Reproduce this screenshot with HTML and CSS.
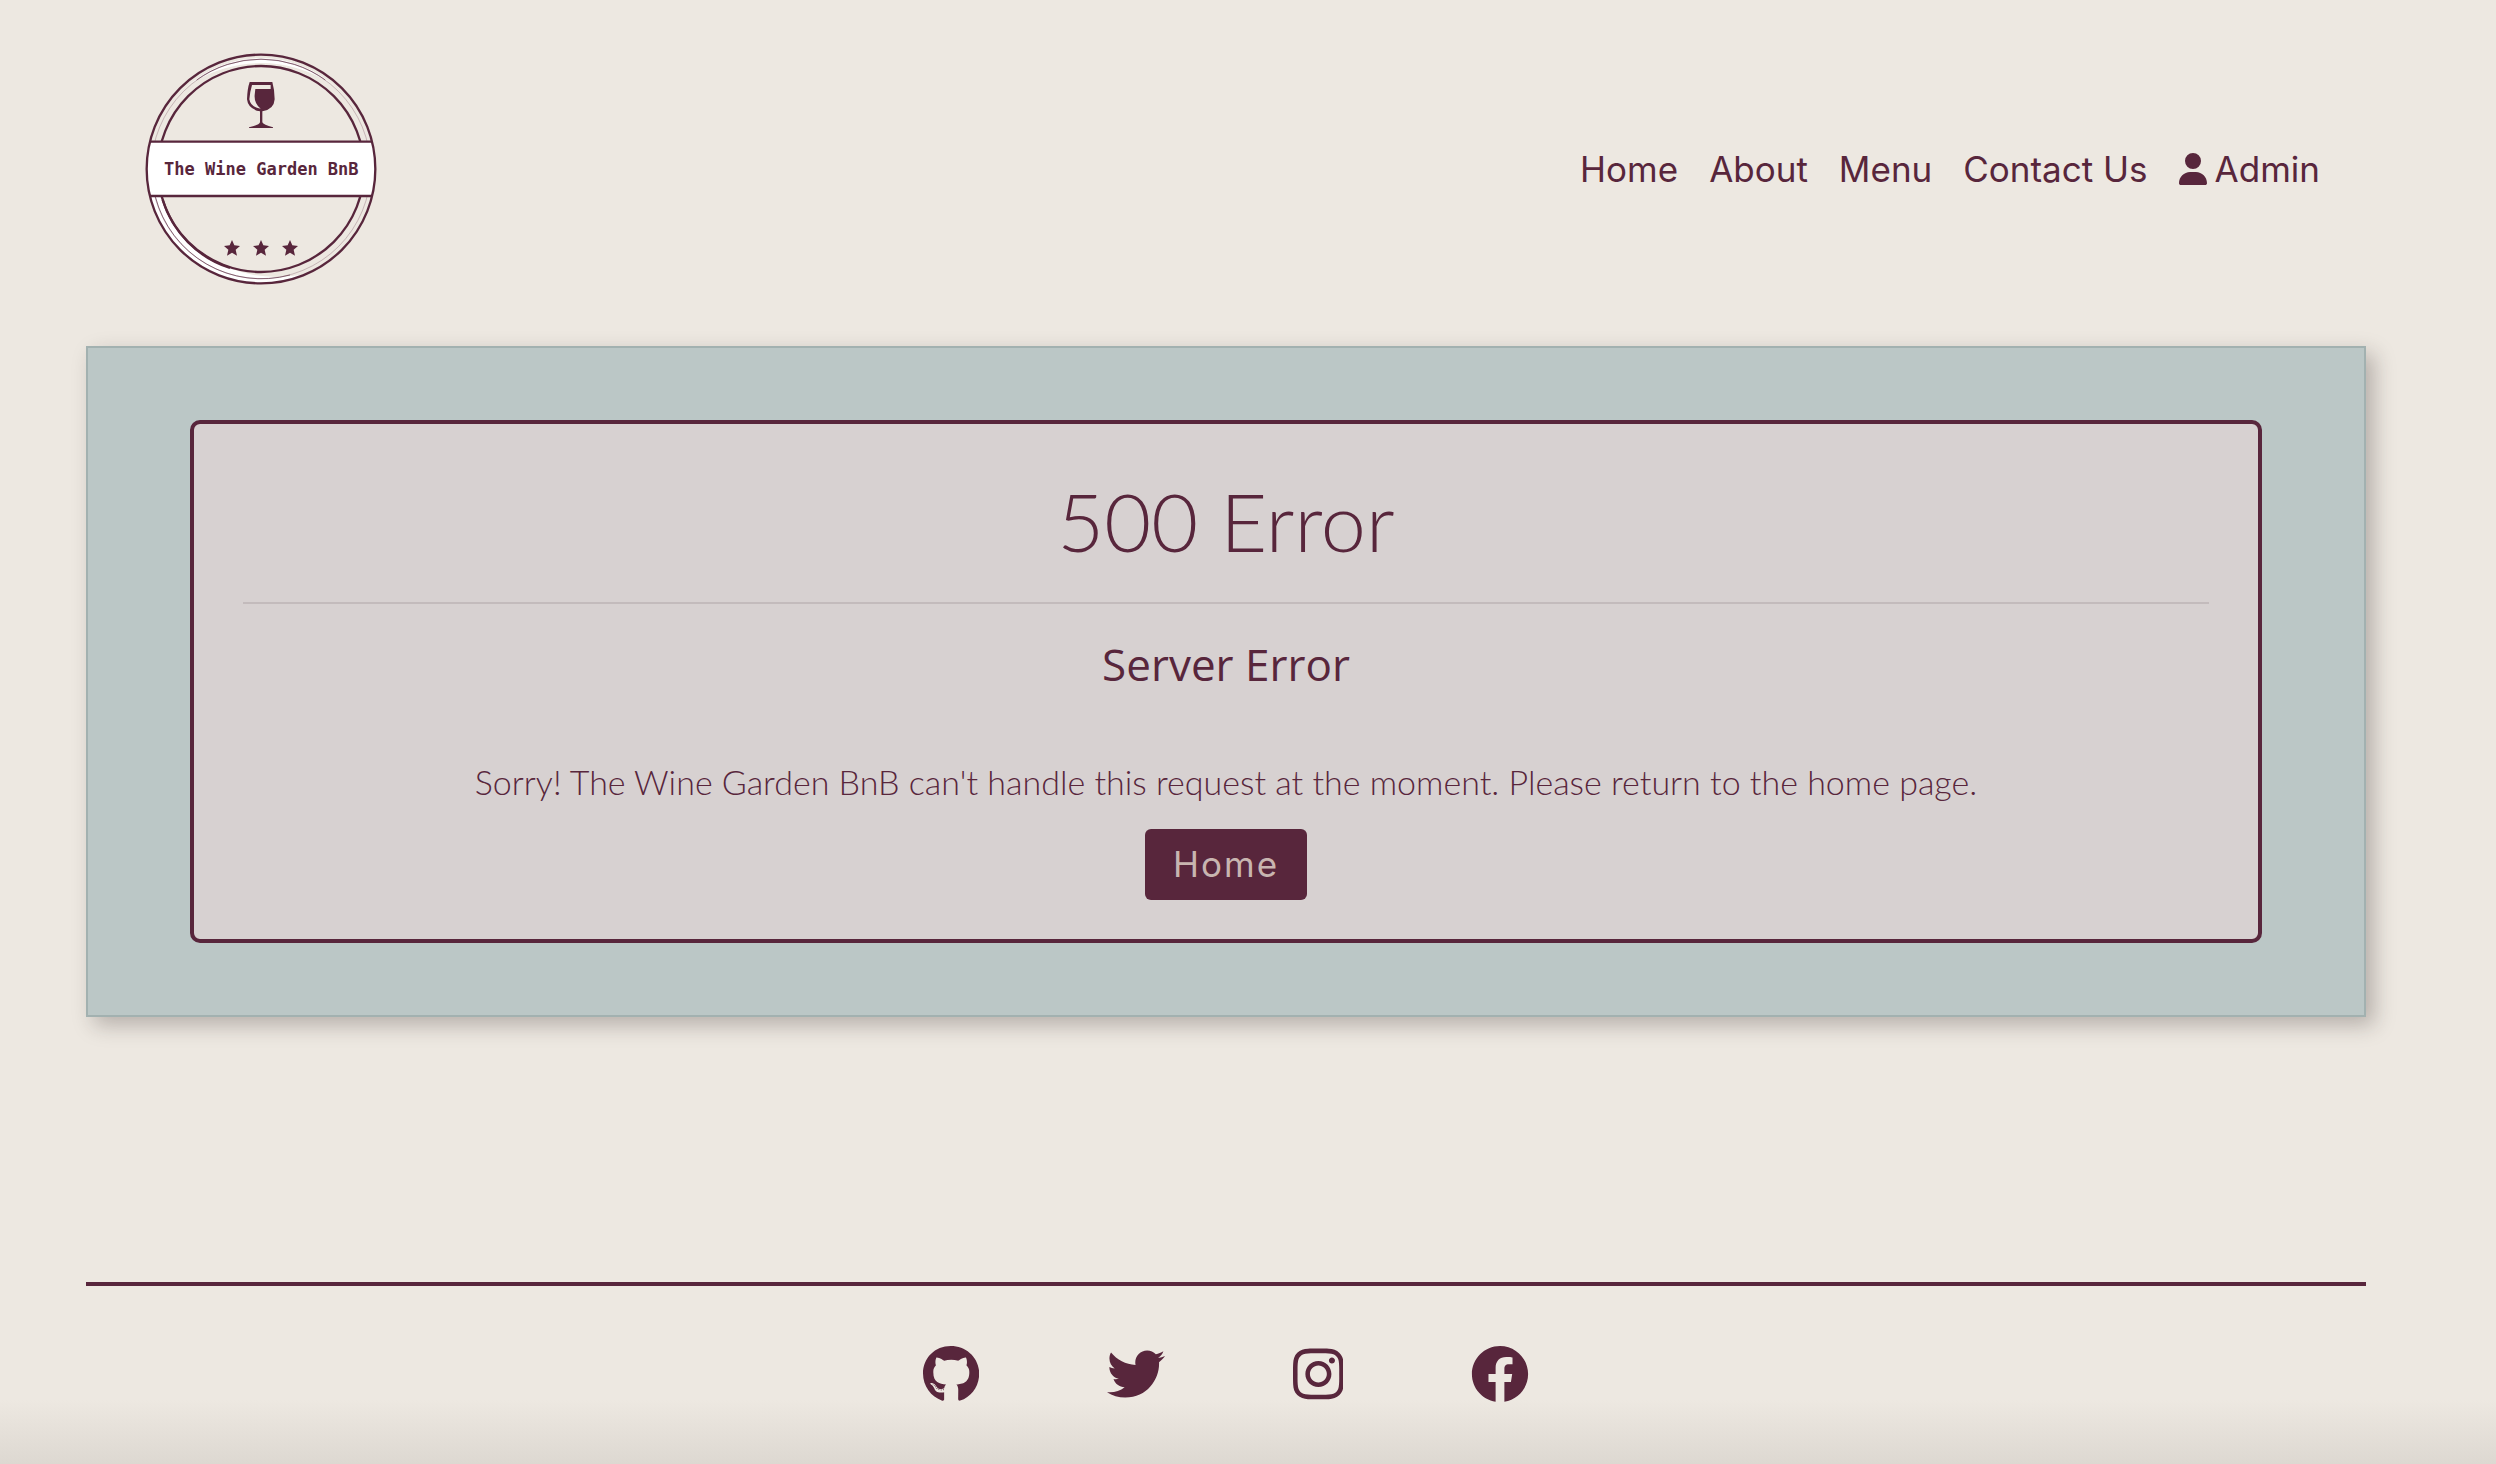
FILE: index.html
```html
<!DOCTYPE html>
<html lang="en">
<head>
<meta charset="utf-8">
<meta name="viewport" content="width=device-width, initial-scale=1">
<title>The Wine Garden BnB</title>
<link rel="stylesheet" href="styles.css">
</head>
<body>
<header class="site-header">
  <a class="brand" href="#" aria-label="The Wine Garden BnB">
    <svg class="logo" viewBox="45 39 696 696" aria-hidden="true">
      <defs>
        <clipPath id="disc"><circle cx="393" cy="387" r="344"/></clipPath>
      </defs>
      <path class="white" d="M165 145A332 332 0 0 1 621 145A342 342 0 0 0 165 145Z M190 126A337 337 0 0 1 596 126A391 391 0 0 0 190 126Z"/>
      <path class="white" d="M60 468A343 343 0 0 0 530 702Q350 735 225 643Q125 570 97 470Z"/>
      <circle class="ring thin faint" cx="393" cy="387" r="329"/>
      <path class="ring thin" d="M200 120A329 329 0 0 1 586 120M76 470A329 329 0 0 0 480 705"/>
      <circle class="ring" cx="393" cy="387" r="309"/>
      <path class="ring" d="M98 480A311 311 0 0 0 300 684"/>
      <g clip-path="url(#disc)">
        <rect class="white" x="40" y="305" width="706" height="163"/>
        <path class="ring" d="M40 305H746M40 468H746"/>
      </g>
      <circle class="ring" cx="393" cy="387" r="343"/>
      <path class="ink" fill-rule="evenodd" d="M359 126H427Q434 150 434 178Q432 209 397 214V247Q400 255 429 262V264H357V262Q388 255 390 247V214Q354 207 351 178Q352 146 359 126ZM366 135Q360 155 358 178Q362 202 392 206Q372 190 374 165L376 147H422V135Z"/>
      <g class="ink">
        <path id="star" d="M306 600L313 616L330 618L317 629L321 647L306 638L291 647L295 629L282 618L299 616Z"/>
        <use href="#star" x="87"/>
        <use href="#star" x="174"/>
      </g>
      <text class="logo-text" x="394" y="405" text-anchor="middle">The Wine Garden BnB</text>
    </svg>
  </a>
  <nav class="site-nav" aria-label="Main">
    <a href="#">Home</a>
    <a href="#">About</a>
    <a href="#">Menu</a>
    <a href="#">Contact Us</a>
    <a class="admin" href="#"><svg class="user" viewBox="0 0 448 512" aria-hidden="true"><path d="M224 256A128 128 0 1 0 224 0a128 128 0 0 0 0 256zm-46 48C80 304 0 384 0 482c0 17 13 30 30 30h388c17 0 30-13 30-30 0-98-80-178-178-178z"/></svg>Admin</a>
  </nav>
</header>
<main class="panel">
  <section class="card">
    <h1>500 Error</h1>
    <hr>
    <h2>Server Error</h2>
    <p>Sorry! The Wine Garden BnB can't handle this request at the moment. Please return to the home page.</p>
    <button class="btn" type="button">Home</button>
  </section>
</main>
<footer class="site-footer">
  <a href="#" aria-label="GitHub"><svg viewBox="0 0 496 512"><path d="M165.9 397.4c0 2-2.3 3.6-5.2 3.6-3.3.3-5.6-1.3-5.6-3.6 0-2 2.3-3.6 5.2-3.6 3-.3 5.6 1.3 5.6 3.6zm-31.1-4.5c-.7 2 1.3 4.3 4.3 4.9 2.6 1 5.6 0 6.2-2s-1.3-4.3-4.3-5.2c-2.6-.7-5.5.3-6.2 2.3zm44.2-1.7c-2.9.7-4.9 2.6-4.6 4.9.3 2 2.9 3.3 5.9 2.6 2.9-.7 4.9-2.6 4.6-4.6-.3-1.9-3-3.2-5.9-2.9zM244.8 8C106.1 8 0 113.3 0 252c0 110.9 69.8 205.8 169.5 239.2 12.8 2.3 17.3-5.6 17.3-12.1 0-6.2-.3-40.4-.3-61.4 0 0-70 15-84.7-29.8 0 0-11.4-29.1-27.8-36.6 0 0-22.9-15.7 1.6-15.4 0 0 24.9 2 38.6 25.8 21.9 38.6 58.6 27.5 72.9 20.9 2.3-16 8.8-27.1 16-33.7-55.9-6.2-112.3-14.3-112.3-110.5 0-27.5 7.6-41.3 23.6-58.9-2.6-6.5-11.1-33.3 2.6-67.9 20.9-6.5 69 27 69 27 20-5.6 41.5-8.5 62.8-8.5s42.8 2.9 62.8 8.5c0 0 48.1-33.6 69-27 13.7 34.7 5.2 61.4 2.6 67.9 16 17.7 25.8 31.5 25.8 58.9 0 96.5-58.9 104.2-114.8 110.5 9.2 7.9 17 22.9 17 46.4 0 33.7-.3 75.4-.3 83.6 0 6.5 4.6 14.4 17.3 12.1C428.2 457.8 496 362.9 496 252 496 113.3 383.5 8 244.8 8zM97.2 352.9c-1.3 1-1 3.3.7 5.2 1.6 1.6 3.9 2.3 5.2 1 1.3-1 1-3.3-.7-5.2-1.6-1.6-3.9-2.3-5.2-1zm-10.8-8.1c-.7 1.3.3 2.9 2.3 3.9 1.6 1 3.6.7 4.3-.7.7-1.3-.3-2.9-2.3-3.9-2-.6-3.6-.3-4.3.7zm32.4 35.6c-1.6 1.3-1 4.3 1.3 6.2 2.3 2.3 5.2 2.6 6.5 1 1.3-1.3.7-4.3-1.3-6.2-2.2-2.3-5.2-2.6-6.5-1zm-11.4-14.7c-1.6 1-1.6 3.6 0 5.9 1.6 2.3 4.3 3.3 5.6 2.3 1.6-1.3 1.6-3.9 0-6.2-1.4-2.3-4-3.3-5.6-2z"/></svg></a>
  <a href="#" aria-label="Twitter"><svg viewBox="0 0 512 512"><path d="M459.37 151.716c.325 4.548.325 9.097.325 13.645 0 138.72-105.583 298.558-298.558 298.558-59.452 0-114.68-17.219-161.137-47.106 8.447.974 16.568 1.299 25.34 1.299 49.055 0 94.213-16.568 130.274-44.832-46.132-.975-84.792-31.188-98.112-72.772 6.498.974 12.995 1.624 19.818 1.624 9.421 0 18.843-1.3 27.614-3.573-48.081-9.747-84.143-51.98-84.143-102.985v-1.299c13.969 7.797 30.214 12.67 47.431 13.319-28.264-18.843-46.781-51.005-46.781-87.391 0-19.492 5.197-37.36 14.294-52.954 51.655 63.675 129.3 105.258 216.365 109.807-1.624-7.797-2.599-15.918-2.599-24.04 0-57.828 46.782-104.934 104.934-104.934 30.213 0 57.502 12.67 76.67 33.137 23.715-4.548 46.456-13.32 66.599-25.34-7.798 24.366-24.366 44.833-46.132 57.827 21.117-2.273 41.584-8.122 60.426-16.243-14.292 20.791-32.161 39.308-52.628 54.253z"/></svg></a>
  <a href="#" aria-label="Instagram"><svg viewBox="0 0 448 512"><path d="M224.1 141c-63.6 0-114.9 51.3-114.9 114.9s51.3 114.9 114.9 114.9S339 319.5 339 255.900 287.700 141 224.100 141zm0 189.600c-41.100 0-74.700-33.500-74.700-74.700s33.500-74.700 74.700-74.700 74.700 33.500 74.700 74.700-33.600 74.700-74.700 74.700zm146.400-194.300c0 14.900-12 26.800-26.800 26.800-14.900 0-26.800-12-26.800-26.800s12-26.800 26.800-26.800 26.800 12 26.800 26.800zm76.100 27.200c-1.700-35.900-9.900-67.700-36.200-93.900-26.200-26.200-58-34.400-93.900-36.200-37-2.100-147.900-2.100-184.900 0-35.800 1.700-67.600 9.900-93.900 36.100s-34.400 58-36.200 93.900c-2.100 37-2.100 147.900 0 184.900 1.700 35.900 9.900 67.700 36.200 93.900s58 34.400 93.900 36.200c37 2.100 147.900 2.100 184.900 0 35.900-1.700 67.700-9.900 93.900-36.200 26.200-26.200 34.400-58 36.200-93.900 2.100-37 2.100-147.800 0-184.800zM398.800 388c-7.800 19.600-22.900 34.700-42.600 42.600-29.500 11.700-99.500 9-132.100 9s-102.700 2.600-132.100-9c-19.600-7.800-34.700-22.900-42.600-42.600-11.700-29.500-9-99.500-9-132.100s-2.600-102.700 9-132.100c7.800-19.600 22.900-34.700 42.600-42.600 29.500-11.700 99.500-9 132.100-9s102.700-2.600 132.100 9c19.600 7.800 34.700 22.900 42.600 42.600 11.700 29.500 9 99.500 9 132.100s2.700 102.700-9 132.100z"/></svg></a>
  <a href="#" aria-label="Facebook"><svg viewBox="0 0 512 512"><path d="M504 256C504 119 393 8 256 8S8 119 8 256c0 123.780 90.690 226.380 209.250 245V327.690h-63V256h63v-54.640c0-62.150 37-96.480 93.670-96.480 27.140 0 55.520 4.840 55.520 4.840v61h-31.280c-30.800 0-40.410 19.120-40.410 38.730V256h68.780l-11 71.690h-57.780V501C413.310 482.380 504 379.780 504 256z"/></svg></a>
</footer>
</body>
</html>
```

FILE: styles.css
```css
:root {
  --cream: #ede8e1;
  --wine: #58263c;
  --sage: #bbc7c6;
}

* {
  box-sizing: border-box;
}

body {
  margin: 0;
  min-height: 100vh;
  padding: 53px 130px 60px 86px;
  color: var(--wine);
  background: linear-gradient(to bottom, var(--cream), #ddd8d1) bottom / 100% 64px no-repeat var(--cream);
  font-family: Inter, "Liberation Sans", sans-serif;
  font-size: 35px;
}

a {
  color: inherit;
  text-decoration: none;
}

svg {
  display: block;
  fill: currentColor;
}

.site-header {
  display: flex;
  align-items: center;
  justify-content: space-between;
  padding: 0 46px 0 59px;
  margin-bottom: 61px;
}

.logo {
  width: 232px;
  height: 232px;
}

.white {
  fill: #fff;
}

.ring {
  fill: none;
  stroke: var(--wine);
  stroke-width: 7;
}

.thin {
  stroke-width: 2;
}

.faint {
  opacity: 0.4;
}

.logo-text {
  font: bold 51px "DejaVu Sans Mono", monospace;
}

.site-nav {
  display: flex;
  flex-wrap: wrap;
  gap: 31px;
  line-height: 40px;
}

.admin {
  display: flex;
  align-items: center;
  gap: 8px;
}

.user {
  width: 28px;
  height: 32px;
}

.panel {
  padding: 72px 102px;
  background: var(--sage);
  border: 2px solid #a2b1b0;
  box-shadow: 8px 8px 20px rgba(40, 30, 30, 0.28);
}

.card {
  display: flex;
  flex-direction: column;
  align-items: center;
  padding: 49px 49px 39px;
  background: #d7d1d1;
  border: 4px solid var(--wine);
  border-radius: 10px;
  text-align: center;
}

h1 {
  margin: 0 0 33px;
  font: 300 81px/96px Lato, sans-serif;
}

hr {
  width: 100%;
  margin: 0;
  border: 0;
  border-top: 2px solid #c3bbbc;
}

h2 {
  margin: 34px 0 68px;
  font: 500 44px/52px "Open Sans", sans-serif;
}

p {
  margin: 0 0 23px;
  font: 300 34px/48px Lato, sans-serif;
}

.btn {
  padding: 15px 28px;
  color: #c8b5b0;
  background: var(--wine);
  border: 0;
  border-radius: 6px;
  font: 400 35px/41px Inter, sans-serif;
  letter-spacing: 2px;
}

.site-footer {
  display: flex;
  justify-content: center;
  gap: 128px;
  margin-top: 265px;
  padding-top: 59px;
  border-top: 4px solid var(--wine);
}

.site-footer svg {
  height: 58px;
}
```
